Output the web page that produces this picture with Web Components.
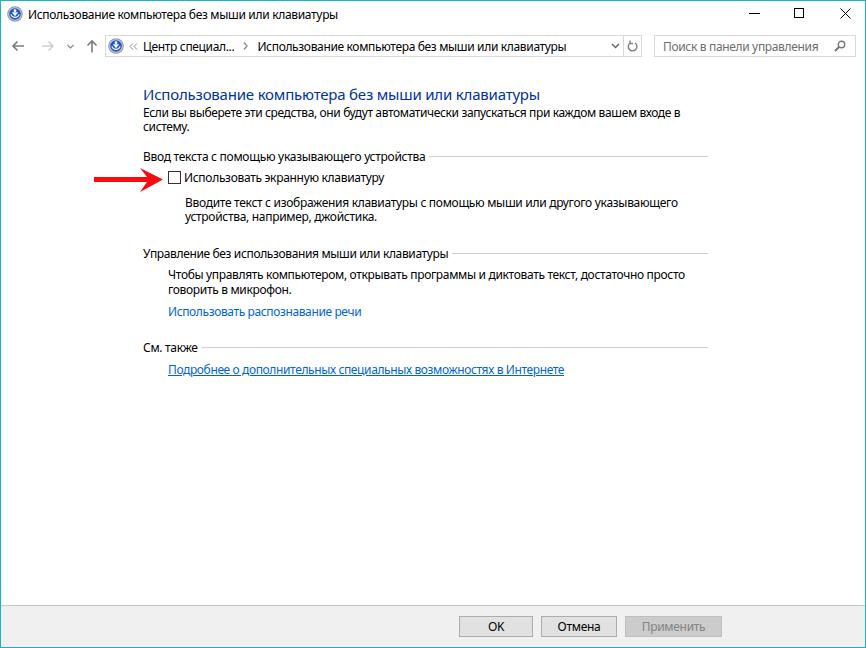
<!DOCTYPE html>
<html lang="ru">
<head>
<meta charset="utf-8">
<title>Использование компьютера без мыши или клавиатуры</title>
<style>
html, body { margin: 0; height: 100%; }
body { font: 12px "Noto Sans", "Open Sans", sans-serif; color: #000; background: #fff; }
</style>
</head>
<body>
<ease-window>
  <ease-titlebar>Использование компьютера без мыши или клавиатуры</ease-titlebar>
  <ease-navbar></ease-navbar>
  <ease-content>
    <ease-heading title="Использование компьютера без мыши или клавиатуры">Если вы выберете эти средства, они будут автоматически запускаться при каждом вашем входе в<br>систему.</ease-heading>
    <ease-section label="Ввод текста с помощью указывающего устройства" top="15" ls="-0.28">
      <ease-check>Использовать экранную клавиатуру</ease-check>
      <ease-note indent="42" top="12" lh="14" ls="-0.3">Вводите текст с изображения клавиатуры с помощью мыши или другого указывающего<br>устройства, например, джойстика.</ease-note>
    </ease-section>
    <ease-section label="Управление без использования мыши или клавиатуры" top="22" ls="-0.36">
      <ease-note indent="25" top="-1" ls="-0.33">Чтобы управлять компьютером, открывать программы и диктовать текст, достаточно просто<br>говорить в микрофон.</ease-note>
      <ease-link indent="25" top="7" ls="-0.38">Использовать распознавание речи</ease-link>
    </ease-section>
    <ease-section label="См. также" top="21" ls="-0.3">
      <ease-link indent="25" ls="-0.38" underline>Подробнее о дополнительных специальных возможностях в Интернете</ease-link>
    </ease-section>
    <ease-arrow></ease-arrow>
  </ease-content>
  <ease-footer>
    <ease-button width="74">OK</ease-button>
    <ease-button width="76">Отмена</ease-button>
    <ease-button width="97" disabled>Применить</ease-button>
  </ease-footer>
</ease-window>
<script>
const appIcon = `<svg width="16" height="16" viewBox="0 0 16 16">
  <circle cx="8" cy="8" r="7.800" fill="#8f96a3"/>
  <circle cx="8" cy="8" r="6.800" fill="#c9ced6"/>
  <circle cx="8" cy="8" r="5.800" fill="#1b55c4"/>
  <circle cx="8" cy="4.700" r="1.400" fill="#fff"/>
  <path d="M4.800 6.300h6.400L8 10.200z" fill="#fff"/>
  <path d="M3.900 8.400a4.300 4.300 0 0 0 8.200 0" fill="none" stroke="#fff" stroke-width="1.200"/>
</svg>`;

class EaseWindow extends HTMLElement {
    constructor() {
        super();
        this.attachShadow({mode: "open"});
        this.shadowRoot.innerHTML = `
            <style>
                :host {
                    display: flex;
                    flex-direction: column;
                    box-sizing: border-box;
                    width: 866px;
                    height: 648px;
                    border: 1px solid #18b4c6;
                    background: #fff;
                    overflow: hidden;
                }
            </style>
            <slot></slot>
        `;
    }
}

class EaseTitlebar extends HTMLElement {
    constructor() {
        super();
        this.attachShadow({mode: "open"});
        this.shadowRoot.innerHTML = `
            <style>
                :host {
                    display: flex;
                    align-items: center;
                    height: 29px;
                    padding-left: 6px;
                    flex: none;
                }
                .name { margin-left: 5px; margin-top: -3px; flex: 1; white-space: nowrap; letter-spacing: -0.32px; }
                .ctl { width: 45px; height: 29px; margin-top: -4px; display: flex; align-items: center; justify-content: center; }
                .max { margin-right: 3px; }
                .close { width: 40px; }
                svg { display: block; }
                .icon { margin-top: -4px; }
            </style>
            <span class="icon">${appIcon}</span>
            <span class="name"><slot></slot></span>
            <span class="ctl"><svg width="11" height="11"><path d="M0 5.5h11" stroke="#000"/></svg></span>
            <span class="ctl max"><svg width="11" height="11"><rect x=".5" y=".5" width="9" height="9" fill="none" stroke="#000"/></svg></span>
            <span class="ctl close"><svg width="11" height="11"><path d="M.5.5l10 10M10.5.5l-10 10" stroke="#000" fill="none"/></svg></span>
        `;
    }
}

class EaseNavbar extends HTMLElement {
    constructor() {
        super();
        this.attachShadow({mode: "open"});
        this.shadowRoot.innerHTML = `
            <style>
                :host {
                    display: flex;
                    align-items: center;
                    height: 22px;
                    margin-top: 5px;
                    padding: 0 9px;
                    flex: none;
                    letter-spacing: -0.34px;
                }
                .btn { display: flex; justify-content: center; flex: none; }
                .box {
                    box-sizing: border-box;
                    height: 22px;
                    border: 1px solid #d9d9d9;
                    display: flex;
                    align-items: center;
                }
                .addr { width: 537px; margin-left: 2px; padding-left: 2px; }
                .addr .path { flex: 1; display: flex; align-items: center; white-space: nowrap; }
                .refresh { width: 17px; height: 20px; border-left: 1px solid #d9d9d9; display: flex; align-items: center; justify-content: center; }
                .search { width: 202px; margin-left: 12px; padding: 0 9px 0 8px; color: #6d6d6d; justify-content: space-between; white-space: nowrap; }
                svg { display: block; flex: none; }
            </style>
            <span class="btn" style="width:16px"><svg width="14" height="12" viewBox="0 0 14 12"><path d="M13 6H2M6.500 1.500 2 6l4.500 4.500" fill="none" stroke="#7b7b7b" stroke-width="1.600"/></svg></span>
            <span class="btn" style="width:30px;margin-left:7px"><svg width="14" height="12" viewBox="0 0 14 12"><path d="M1 6h11M7.500 1.500 12 6l-4.500 4.500" fill="none" stroke="#d0d0d0" stroke-width="1.600"/></svg></span>
            <span class="btn" style="width:9px;margin-left:3px"><svg width="7" height="5" viewBox="0 0 7 5"><path d="M.5 1l3 3 3-3" fill="none" stroke="#8a8a8a" stroke-width="1.200"/></svg></span>
            <span class="btn" style="width:22px;margin-left:6px"><svg width="12" height="14" viewBox="0 0 12 14"><path d="M6 13.500V2M1.500 6.500 6 2l4.500 4.500" fill="none" stroke="#7b7b7b" stroke-width="1.600"/></svg></span>
            <div class="box addr">
                <div class="path">
                    ${appIcon}
                    <svg style="margin-left:5px" width="9" height="7" viewBox="0 0 9 7"><path d="M4 .5 1 3.500l3 3M8 .5 5 3.500l3 3" fill="none" stroke="#888"/></svg>
                    <span style="margin-left:5px">Центр специал...</span>
                    <svg style="margin-left:9px" width="5" height="8" viewBox="0 0 5 8"><path d="M1 .5 4 4 1 7.500" fill="none" stroke="#888" stroke-width="1.300"/></svg>
                    <span style="margin-left:9px">Использование компьютера без мыши или клавиатуры</span>
                </div>
                <svg style="margin-right:3px" width="9" height="6" viewBox="0 0 9 6"><path d="M1 1l3.500 3.500L8 1" fill="none" stroke="#666" stroke-width="1.500"/></svg>
                <span class="refresh"><svg width="11" height="12" viewBox="0 0 11 12"><path d="M3.500 2.800A4.300 4.300 0 1 0 8 3M3 .5v3h3" fill="none" stroke="#7d7d7d" stroke-width="1.400"/></svg></span>
            </div>
            <div class="box search">
                <span>Поиск в панели управления</span>
                <svg width="12" height="12" viewBox="0 0 12 12"><circle cx="7.500" cy="4.500" r="3.200" fill="none" stroke="#777" stroke-width="1.400"/><path d="M5 7 1 11" stroke="#777" stroke-width="2"/></svg>
            </div>
        `;
    }
}

class EaseContent extends HTMLElement {
    constructor() {
        super();
        this.attachShadow({mode: "open"});
        this.shadowRoot.innerHTML = `
            <style>
                :host {
                    display: block;
                    position: relative;
                    flex: 1;
                    min-height: 0;
                    padding: 27px 157px 0 142px;
                    line-height: 15px;
                }
            </style>
            <slot></slot>
        `;
    }
}

class EaseHeading extends HTMLElement {
    constructor() {
        super();
        this.attachShadow({mode: "open"});
        this.shadowRoot.innerHTML = `
            <style>
                :host { display: block; }
                h1 { margin: 0; font-size: 15px; font-weight: 400; line-height: 20px; padding-bottom: 2px; color: #003399; letter-spacing: -0.2px; white-space: nowrap; }
                p { margin: 0; line-height: 14px; white-space: nowrap; letter-spacing: -0.37px; }
            </style>
            <h1>${this.getAttribute("title")}</h1>
            <p><slot></slot></p>
        `;
    }
}

class EaseSection extends HTMLElement {
    constructor() {
        super();
        this.attachShadow({mode: "open"});
        const top = this.getAttribute("top") || 0;
        this.shadowRoot.innerHTML = `
            <style>
                :host { display: block; margin-top: ${top}px; }
                .head { display: flex; align-items: center; gap: 4px; height: 15px; white-space: nowrap; margin-bottom: 7px; letter-spacing: ${this.getAttribute("ls") || 0}px; }
                .line { flex: 1; height: 1px; background: #d0d0d0; }
            </style>
            <div class="head"><span>${this.getAttribute("label")}</span><span class="line"></span></div>
            <slot></slot>
        `;
    }
}

class EaseCheck extends HTMLElement {
    constructor() {
        super();
        this.attachShadow({mode: "open"});
        this.shadowRoot.innerHTML = `
            <style>
                :host { display: flex; align-items: center; margin-left: 25px; height: 13px; gap: 3px; white-space: nowrap; letter-spacing: -0.31px; }
                .box { box-sizing: border-box; width: 13px; height: 13px; border: 1px solid #333; background: #fff; flex: none; }
            </style>
            <span class="box"></span><span><slot></slot></span>
        `;
    }
}

class EaseNote extends HTMLElement {
    constructor() {
        super();
        this.attachShadow({mode: "open"});
        this.shadowRoot.innerHTML = `
            <style>
                :host {
                    display: block;
                    margin-left: ${this.getAttribute("indent") || 0}px;
                    margin-top: ${this.getAttribute("top") || 0}px;
                    line-height: ${this.getAttribute("lh") || 15}px;
                    letter-spacing: ${this.getAttribute("ls") || 0}px;
                    white-space: nowrap;
                }
            </style>
            <slot></slot>
        `;
    }
}

class EaseLink extends HTMLElement {
    constructor() {
        super();
        this.attachShadow({mode: "open"});
        this.shadowRoot.innerHTML = `
            <style>
                :host {
                    display: block;
                    margin-left: ${this.getAttribute("indent") || 0}px;
                    margin-top: ${this.getAttribute("top") || 0}px;
                    line-height: 15px;
                    letter-spacing: ${this.getAttribute("ls") || 0}px;
                    white-space: nowrap;
                    color: #0066cc;
                    text-decoration: ${this.hasAttribute("underline") ? "underline" : "none"};
                }
            </style>
            <slot></slot>
        `;
    }
}

class EaseArrow extends HTMLElement {
    constructor() {
        super();
        this.attachShadow({mode: "open"});
        this.shadowRoot.innerHTML = `
            <style>
                :host { position: absolute; left: 93px; top: 111px; width: 70px; height: 25px; }
                svg { display: block; }
            </style>
            <svg width="70" height="25" viewBox="0 0 70 25"><path d="M0 9h53L46 0l23 11.500L46 24l7-10H0z" fill="#fb0a12"/></svg>
        `;
    }
}

class EaseFooter extends HTMLElement {
    constructor() {
        super();
        this.attachShadow({mode: "open"});
        this.shadowRoot.innerHTML = `
            <style>
                :host {
                    display: flex;
                    justify-content: flex-end;
                    gap: 8px;
                    box-sizing: border-box;
                    height: 42px;
                    padding: 10px 143px 0 0;
                    flex: none;
                    background: #f0f0f0;
                    border-top: 1px solid #c8c8c8;
                }
            </style>
            <slot></slot>
        `;
    }
}

class EaseButton extends HTMLElement {
    constructor() {
        super();
        this.attachShadow({mode: "open"});
        const off = this.hasAttribute("disabled");
        this.shadowRoot.innerHTML = `
            <style>
                :host {
                    display: flex;
                    align-items: center;
                    justify-content: center;
                    box-sizing: border-box;
                    width: ${this.getAttribute("width")}px;
                    height: 21px;
                    letter-spacing: -0.3px;
                    background: ${off ? "#cccccc" : "#e1e1e1"};
                    border: 1px solid ${off ? "#bfbfbf" : "#adadad"};
                    color: ${off ? "#838383" : "#000"};
                }
            </style>
            <slot></slot>
        `;
    }
}

customElements.define("ease-window", EaseWindow);
customElements.define("ease-titlebar", EaseTitlebar);
customElements.define("ease-navbar", EaseNavbar);
customElements.define("ease-content", EaseContent);
customElements.define("ease-heading", EaseHeading);
customElements.define("ease-section", EaseSection);
customElements.define("ease-check", EaseCheck);
customElements.define("ease-note", EaseNote);
customElements.define("ease-link", EaseLink);
customElements.define("ease-arrow", EaseArrow);
customElements.define("ease-footer", EaseFooter);
customElements.define("ease-button", EaseButton);
</script>
</body>
</html>
